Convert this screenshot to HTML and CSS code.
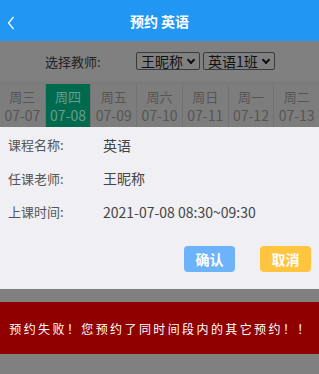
FILE: index.html
```html
<!DOCTYPE html>
<html lang="zh">
<head>
    <meta charset="UTF-8">
    <meta name="viewport" content="width=device-width, initial-scale=1.0">
    <title>预约 英语</title>
    <link rel="stylesheet" href="styles.css">
</head>
<body>
    <header class="topbar">
        <span class="back">
            <svg width="10" height="16" viewBox="0 0 10 16"><path d="M7.5 2 L2.5 8 L7.5 14" fill="none" stroke="#fff" stroke-width="1.2"/></svg>
        </span>
        <h1>预约 英语</h1>
    </header>

    <div class="filter">
        <span class="filter-label">选择教师:</span>
        <span class="pick">王昵称 <i class="caret"></i></span>
        <span class="pick">英语1班 <i class="caret"></i></span>
    </div>

    <ul class="days">
        <li><span>周三</span><span>07-07</span></li>
        <li class="active"><span>周四</span><span>07-08</span></li>
        <li><span>周五</span><span>07-09</span></li>
        <li><span>周六</span><span>07-10</span></li>
        <li><span>周日</span><span>07-11</span></li>
        <li><span>周一</span><span>07-12</span></li>
        <li><span>周二</span><span>07-13</span></li>
    </ul>

    <div class="sheet">
        <div class="row"><span class="label">课程名称:</span><span class="value">英语</span></div>
        <div class="row"><span class="label">任课老师:</span><span class="value">王昵称</span></div>
        <div class="row"><span class="label">上课时间:</span><span class="value">2021-07-08 08:30~09:30</span></div>
        <div class="actions">
            <button class="ok">确认</button>
            <button class="cancel">取消</button>
        </div>
    </div>

    <div class="toast">预约失败！您预约了同时间段内的其它预约！！</div>
</body>
</html>
```
FILE: styles.css
```css
body {
    margin: 0;
    width: 319px;
    height: 374px;
    overflow: hidden;
    background: #808080;
    font-family: "Noto Sans CJK SC", "Liberation Sans", sans-serif;
}

.topbar {
    height: 41px;
    background: #2196f3;
    display: flex;
    align-items: center;
    justify-content: center;
    position: relative;
}

.topbar h1 {
    margin: 0;
    color: #fff;
    font-size: 14px;
    font-weight: bold;
}

.back {
    position: absolute;
    left: 6px;
    top: 12px;
}

.filter {
    height: 40px;
    display: flex;
    align-items: center;
    padding-left: 45px;
    box-sizing: border-box;
    font-size: 13px;
    color: #222;
}

.filter-label {
    width: 91px;
}

.pick {
    display: flex;
    align-items: center;
    height: 18px;
    border: 1px solid #3a3a3a;
    border-radius: 2px;
    padding: 0 4px;
    margin-right: 3px;
    font-size: 14px;
    color: #111;
    box-sizing: border-box;
}

.caret {
    width: 4px;
    height: 4px;
    border-right: 2px solid #111;
    border-bottom: 2px solid #111;
    transform: rotate(45deg);
    margin: -3px 1px 0 5px;
}

.days {
    list-style: none;
    margin: 0;
    padding: 0;
    height: 46px;
    display: flex;
    border-top: 3px solid #7c7c7c;
    box-sizing: border-box;
}

.days li {
    flex: 1;
    display: flex;
    flex-direction: column;
    align-items: center;
    justify-content: center;
    border-right: 1px solid #727272;
    background: #7d7d7d;
    color: #555;
    font-size: 13px;
    line-height: 19px;
    padding-top: 1px;
}

.days li:last-child {
    border-right: none;
}

.days li.active {
    background: #006a4e;
    color: #6b9c8c;
}

.days li span:last-child {
    font-size: 14px;
}

.sheet {
    background: #efeff4;
    height: 162px;
    padding: 1px 8px 0;
    box-sizing: border-box;
}

.row {
    display: flex;
    height: 33.5px;
    align-items: center;
    font-size: 13px;
    color: #555;
}

.label {
    width: 95px;
}

.value {
    color: #444;
    font-size: 14px;
}

.actions {
    display: flex;
    justify-content: flex-end;
    gap: 25px;
    margin-top: 17px;
}

.actions button {
    width: 51px;
    height: 26px;
    border: none;
    border-radius: 4px;
    color: #fff;
    font-family: inherit;
    font-size: 14px;
    font-weight: bold;
    padding: 0;
}

.ok {
    background: #6cb3f9;
}

.cancel {
    background: #ffc53f;
}

.toast {
    margin-top: 13px;
    height: 52px;
    background: #900000;
    color: #fff;
    display: flex;
    align-items: center;
    justify-content: center;
    font-size: 12px;
    letter-spacing: 2.4px;
    padding-left: 2px;
}
```
